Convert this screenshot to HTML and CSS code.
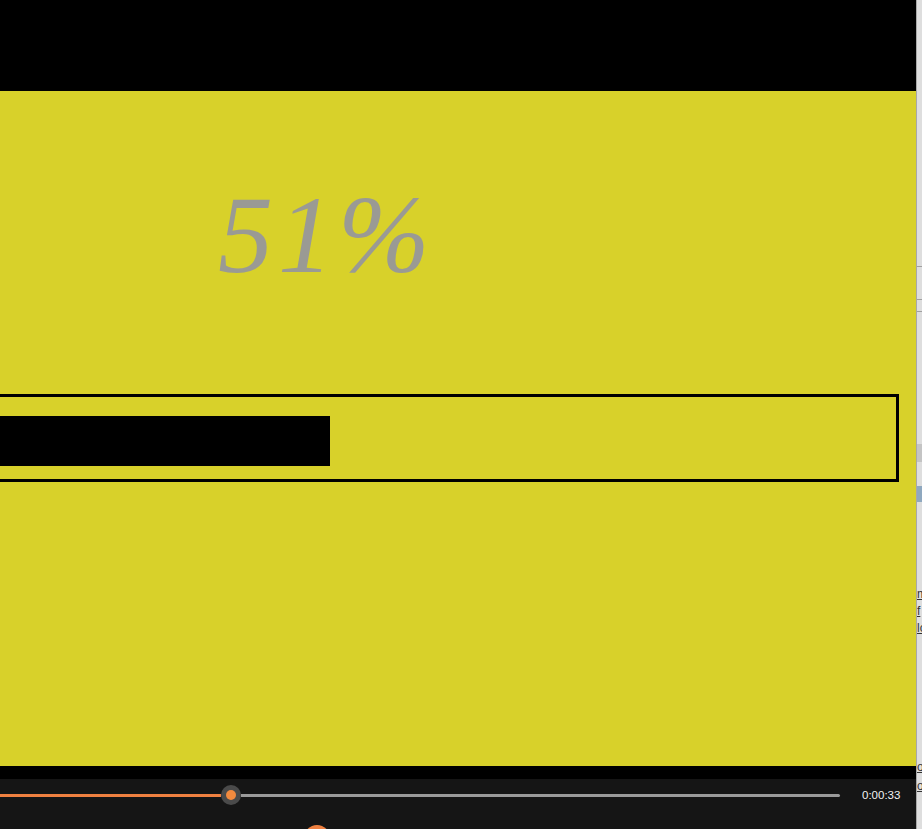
FILE: index.html
```html
<!DOCTYPE html>
<html>
<head>
<meta charset="utf-8">
<link rel="stylesheet" href="styles.css">
</head>
<body>
<div class="page">
  <div class="stage">
    <div class="topbar"></div>
    <div class="slide">
      <div class="percent">51%</div>
      <div class="bar">
        <div class="fill"></div>
      </div>
    </div>
    <div class="strip"></div>
    <div class="controls">
      <div class="seek">
        <div class="played"></div>
        <div class="thumb"><div class="dot"></div></div>
        <div class="rest"></div>
        <div class="time">0:00:33</div>
      </div>
      <div class="buttons"><div class="play"></div></div>
    </div>
  </div>
  <div class="side">
    <div class="rule r1"></div>
    <div class="rule r2"></div>
    <div class="rule r3"></div>
    <div class="grayblock"></div>
    <div class="blueblock"></div>
    <div class="links">
      <a class="lnk">m</a>
      <a class="lnk">f</a>
      <a class="lnk">lo</a>
    </div>
    <div class="links2">
      <a class="lnk">o</a>
      <a class="lnk">o</a>
    </div>
  </div>
</div>
</body>
</html>
```

FILE: styles.css
```css
html, body {
  margin: 0;
  padding: 0;
  background: #151515;
  overflow: hidden;
}
.page {
  display: flex;
  width: 922px;
  height: 829px;
  overflow: hidden;
}
.stage {
  width: 916px;
  flex: none;
  display: flex;
  flex-direction: column;
  overflow: hidden;
}
.topbar {
  height: 91px;
  background: #000;
  flex: none;
}
.slide {
  height: 675px;
  flex: none;
  background: #d8d12a;
  overflow: hidden;
  display: flex;
  flex-direction: column;
}
.percent {
  margin-top: 89px;
  padding-left: 218px;
  font-family: "Liberation Serif", "DejaVu Serif", serif;
  font-style: italic;
  font-size: 110px;
  line-height: 110px;
  height: 110px;
  letter-spacing: 5px;
  color: #9a9a94;
  flex: none;
}
.bar {
  margin-top: 104px;
  margin-left: -250px;
  width: 1149px;
  box-sizing: border-box;
  border: 3px solid #000;
  padding: 19px 0 13px 0;
  flex: none;
}
.fill {
  margin-left: 21px;
  width: 556px;
  height: 50px;
  background: #000;
}
.strip {
  height: 13px;
  background: #000;
  flex: none;
}
.controls {
  height: 50px;
  flex: none;
  background: #151515;
  display: flex;
  flex-direction: column;
  overflow: hidden;
}
.seek {
  height: 32px;
  flex: none;
  display: flex;
  align-items: center;
}
.played {
  width: 221px;
  height: 3px;
  background: #ef8040;
  flex: none;
}
.thumb {
  width: 20px;
  height: 20px;
  border-radius: 50%;
  background: #4a4a4a;
  display: flex;
  align-items: center;
  justify-content: center;
  flex: none;
}
.dot {
  width: 10px;
  height: 10px;
  border-radius: 50%;
  background: #f28a3e;
}
.rest {
  width: 599px;
  height: 3px;
  background: #9a9a9a;
  border-radius: 0 2px 2px 0;
  flex: none;
}
.time {
  margin-left: 22px;
  font-family: "Liberation Sans", Arial, sans-serif;
  font-size: 11.5px;
  color: #f2f2f2;
}
.buttons {
  flex: none;
  padding-left: 304px;
  padding-top: 14px;
}
.play {
  width: 26px;
  height: 26px;
  border-radius: 50%;
  background: #ef8040;
}
.side {
  width: 6px;
  flex: none;
  box-sizing: border-box;
  border-left: 1px solid #a8a8a8;
  background: #dedede;
  display: flex;
  flex-direction: column;
  overflow: hidden;
}
.rule {
  height: 1px;
  background: #a0a0a0;
  flex: none;
}
.r1 { margin-top: 266px; }
.r2 { margin-top: 32px; }
.r3 { margin-top: 11px; }
.grayblock {
  margin-top: 132px;
  height: 18px;
  background: #c4c4c4;
  flex: none;
}
.blueblock {
  margin-top: 24px;
  height: 16px;
  background: #8fa8bf;
  flex: none;
}
.links {
  margin-top: 84px;
  display: flex;
  flex-direction: column;
  font-family: "Liberation Sans", Arial, sans-serif;
  font-size: 12px;
  line-height: 17px;
}
.links2 {
  margin-top: 121px;
  display: flex;
  flex-direction: column;
  font-family: "Liberation Sans", Arial, sans-serif;
  font-size: 12px;
  line-height: 19px;
}
.lnk {
  color: #333;
  text-decoration: underline;
  white-space: nowrap;
}
```
